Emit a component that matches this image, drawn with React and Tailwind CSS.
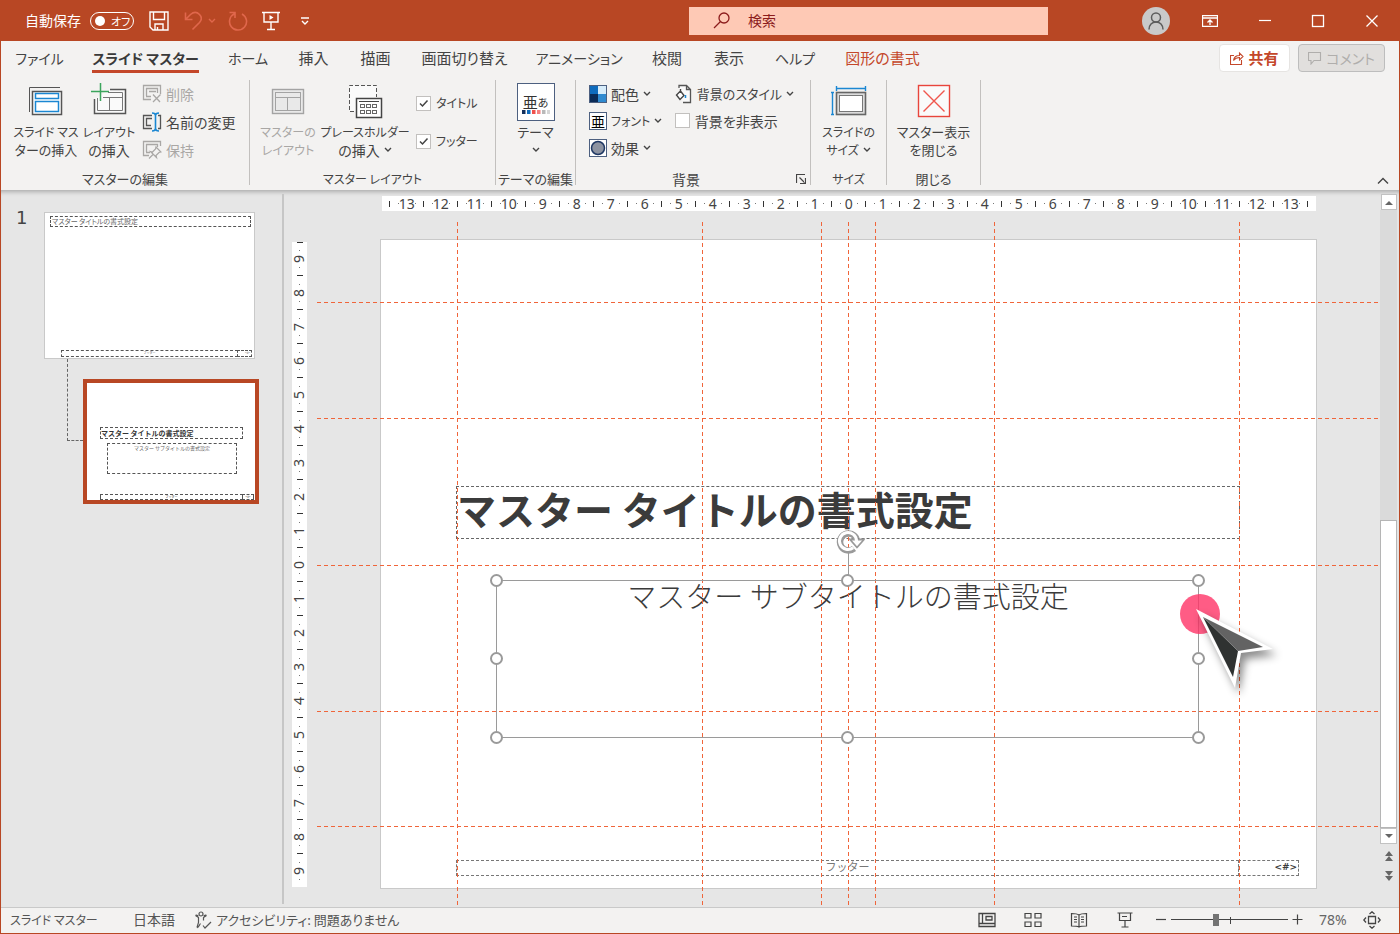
import { useState } from 'react';
import clsx from 'clsx';

const TABS = [
  { label: 'ファイル', width: 'w-[77px]' },
  { label: 'スライド マスター', width: 'w-[135px]', active: true },
  { label: 'ホーム', width: 'w-[70px]' },
  { label: '挿入', width: 'w-[61px]' },
  { label: '描画', width: 'w-[63px]' },
  { label: '画面切り替え', width: 'w-[115px]' },
  { label: 'アニメーション', width: 'w-[114px]' },
  { label: '校閲', width: 'w-[62px]' },
  { label: '表示', width: 'w-[62px]' },
  { label: 'ヘルプ', width: 'w-[70px]' },
  { label: '図形の書式', width: 'w-[105px]', context: true },
];

// guide offsets: vertical ones from the slide centre, horizontal ones from the top
const V_GUIDES = [-392, -147, -28, -1, 26, 145, 390];
const H_GUIDES = [112, 228, 375, 521, 636];

const HANDLES = [
  '-left-[7px] -top-[7px]',
  'left-1/2 -ml-[7px] -top-[7px]',
  '-right-[7px] -top-[7px]',
  '-left-[7px] top-1/2 -mt-[7px]',
  '-right-[7px] top-1/2 -mt-[7px]',
  '-left-[7px] -bottom-[7px]',
  'left-1/2 -ml-[7px] -bottom-[7px]',
  '-right-[7px] -bottom-[7px]',
];

// tick, dot, number, dot for every centimetre
function rulerMarks(max) {
  const marks = [];
  for (let n = -max; n <= max; n++) {
    marks.push('tick', 'dot', Math.abs(n), 'dot');
  }
  return marks;
}

// kana is set smaller than kanji so that long katakana labels stay narrow
function textSize(label) {
  const chars = label.replace(/\s/g, '');
  const kana = (chars.match(/[ぁ-んァ-ヶー]/g) || []).length;
  if (kana === chars.length) return 'text-xs';
  return kana / chars.length >= 0.5 ? 'text-[13px]' : 'text-sm';
}

/* ---------- icons ---------- */

function Svg({ w, h, children, className }) {
  return (
    <svg
      width={w}
      height={h}
      viewBox={`0 0 ${w} ${h}`}
      fill="none"
      stroke="currentColor"
      className={clsx('shrink-0', className)}
      aria-hidden="true"
    >
      {children}
    </svg>
  );
}

function Chevron() {
  return (
    <Svg w={8} h={6}>
      <path d="M1 1l3 3 3-3" strokeWidth="1.4" />
    </Svg>
  );
}

function SaveIcon() {
  return (
    <Svg w={20} h={20}>
      <path d="M1 1h18v18H4l-3-3zM4.500 1v7.500h11V1M6 19v-6h8v6M8.500 19v-3" strokeWidth="1.4" />
    </Svg>
  );
}

function UndoIcon() {
  return (
    <Svg w={18} h={20}>
      <path d="M1.500 1.500v7h7M1.500 8.500L6.500 3.500c3-2.500 6.500-2.500 9 0s2.200 5.500 0 8L8.500 18.500" strokeWidth="1.6" />
    </Svg>
  );
}

function RedoIcon() {
  return (
    <Svg w={20} h={20}>
      <path d="M1.500 1.500h5.500v5.500M6.500 2.800A8.500 8.500 0 1 0 14 3" strokeWidth="1.6" />
    </Svg>
  );
}

function PresentIcon() {
  return (
    <Svg w={18} h={20}>
      <path d="M0 1.500h18M2 1.500v9.500h14V1.500M9 11v7.500M5 18.500h8" strokeWidth="1.4" />
      <path d="M7.500 4v5l4-2.500z" fill="currentColor" stroke="none" />
    </Svg>
  );
}

function InsertMasterIcon() {
  return (
    <Svg w={36} h={36}>
      <path d="M1.500 29V4.500H32" stroke="#555" />
      <rect x="4.500" y="8.500" width="29" height="23" fill="#fff" stroke="#555" strokeWidth="1.5" />
      <rect x="7.500" y="10.500" width="23" height="5" stroke="#1b87d2" strokeWidth="1.5" />
      <rect x="7.500" y="18.500" width="23" height="10" stroke="#1b87d2" strokeWidth="1.5" />
    </Svg>
  );
}

function InsertLayoutIcon() {
  return (
    <Svg w={36} h={36}>
      <path d="M19 6.500h15.500v24h-31V16" fill="#fafafa" stroke="#555" strokeWidth="1.5" />
      <path d="M17 9.500h14.500v18h-25V15M12 14.500h19.500M18.500 14.500v13" stroke="#777" />
      <path d="M9.500 0v18M0 8.500h18" stroke="#3ba55c" strokeWidth="1.5" />
    </Svg>
  );
}

function MasterLayoutIcon() {
  return (
    <Svg w={36} h={36}>
      <rect x="2.500" y="6.500" width="31" height="24" fill="#e9e9e9" stroke="#a3a3a3" strokeWidth="1.4" />
      <rect x="5.500" y="9.500" width="25" height="18" stroke="#a3a3a3" />
      <path d="M5.500 14.500h25M17.500 14.500v13" stroke="#a3a3a3" />
    </Svg>
  );
}

function PlaceholderIcon() {
  return (
    <Svg w={36} h={36}>
      <path d="M7 28.500H2.500v-26h27V14" fill="#fafafa" stroke="#555" strokeDasharray="4 2" />
      <rect x="9.500" y="15.500" width="25" height="19" fill="#fff" stroke="#444" strokeWidth="1.5" />
      <path d="M12 18.500h20" stroke="#444" />
      {[14, 20, 26].map((x) => (
        <g key={x} stroke="#666">
          <rect x={x - 0.5} y="21.500" width="4" height="3" />
          <rect x={x - 0.5} y="27.500" width="4" height="3" />
        </g>
      ))}
    </Svg>
  );
}

function SlideSizeIcon() {
  return (
    <Svg w={36} h={36}>
      <rect x="5.500" y="9.500" width="29" height="22" fill="#dcdcdc" stroke="#666" strokeWidth="1.6" />
      <rect x="8.500" y="12.500" width="23" height="16" fill="#fff" stroke="#777" />
      <path d="M5 5.500h30M5.500 3v5M34.500 3v5M1.500 9v23M0 9.500h3M0 31.500h3" stroke="#1b87d2" strokeWidth="1.4" />
    </Svg>
  );
}

function CloseMasterIcon() {
  return (
    <Svg w={36} h={36}>
      <rect x="2.500" y="2.500" width="31" height="31" fill="#fafafa" stroke="#e8453c" strokeWidth="1.4" />
      <path d="M7.500 7.500l21 21M28.500 7.500l-21 21" stroke="#f0564d" strokeWidth="1.4" />
    </Svg>
  );
}

function ThemeIcon() {
  const swatches = ['#14305c', '#0f6cbd', '#f0504a', '#f58080', '#b9b9b9', '#d6d6d6'];
  return (
    <span className="flex h-[38px] w-[38px] flex-col items-center justify-end border border-[#4d6080] bg-white pb-1.5 text-[#333]">
      <span className="flex items-end leading-4">
        <span className="text-[15px]">亜</span>
        <span className="text-[11px]">あ</span>
      </span>
      <Svg w={28} h={4}>
        {swatches.map((c, i) => (
          <rect key={c} x={i * 5} y="0" width="3.5" height="4" fill={c} stroke="none" />
        ))}
      </Svg>
    </span>
  );
}

function DeleteIcon() {
  return (
    <Svg w={20} h={20}>
      <path d="M9 15.500H1.500v-14h17V10M4 12.500h5M4.500 12V4.500h11V9M7 7.500h7" strokeWidth="1.3" />
      <path d="M11 10.500l7 7.500M18.500 10.500L11 18" strokeWidth="1.3" />
    </Svg>
  );
}

function RenameIcon() {
  return (
    <Svg w={20} h={20}>
      <path d="M10 16.500H1.500v-13H10M9 13.500H4.500v-7H10M16 3.500h2.500v13H16" stroke="#555" strokeWidth="1.3" />
      <path d="M10 1c2 0 3.500 1 3.500 2.500v13c0 1.500-1.500 2.500-3.500 2.500M17 1c-2 0-3.500 1-3.500 2.500v13c0 1.500 1.500 2.500 3.500 2.500" stroke="#1b87d2" strokeWidth="1.6" />
    </Svg>
  );
}

function PreserveIcon() {
  return (
    <Svg w={20} h={20}>
      <path d="M7 15.500H1.500v-14h17V6M4 12.500h4M4.500 12V4.500h11V7" strokeWidth="1.3" />
      <path d="M14 7l5 5-2 .5-3 3 .5 2-6-6 2 .5 3-3zM11 14.500L7 18.500" strokeWidth="1.2" />
    </Svg>
  );
}

function ColorsIcon() {
  return (
    <Svg w={18} h={18}>
      <rect x="0" y="0" width="9" height="9" fill="#0f6cbd" stroke="none" />
      <rect x="9" y="0" width="9" height="9" fill="#d6ecfa" stroke="none" />
      <rect x="0" y="9" width="9" height="9" fill="#0b2c57" stroke="none" />
      <rect x="9" y="9" width="9" height="9" fill="#2f8ad0" stroke="none" />
      <rect x=".5" y=".5" width="17" height="17" stroke="#4d6080" />
    </Svg>
  );
}

function EffectsIcon() {
  return (
    <Svg w={18} h={18}>
      <rect x=".5" y=".5" width="17" height="17" fill="#fff" stroke="#4d6080" />
      <circle cx="9" cy="9" r="6.500" fill="#8d93a1" stroke="#1f3864" strokeWidth="1.5" />
    </Svg>
  );
}

function BackgroundStyleIcon() {
  return (
    <Svg w={18} h={20}>
      <path d="M4 4V1.500h7.500l4 4v13H8M11.500 1.500v4h4" fill="#fafafa" stroke="#555" strokeWidth="1.3" />
      <path d="M5.500 5v4M5.500 7L1.500 11l3.500 4.500L9 11.500z" fill="#fff" stroke="#444" strokeWidth="1.4" />
      <path d="M10.500 11v3" stroke="#1b87d2" strokeWidth="1.5" />
    </Svg>
  );
}

function RotateHandle() {
  return (
    <Svg w={30} h={26} className="absolute -top-[52px] left-1/2 -ml-[12px]">
      <path d="M18 19.500A8.500 8.500 0 1 1 20.500 10" stroke="#9a9a9a" strokeWidth="6.5" />
      <path d="M14 10.500h14l-7 8z" fill="#fff" stroke="#9a9a9a" strokeWidth="1.8" strokeLinejoin="round" />
      <path d="M17.200 18.700A8.500 8.500 0 1 1 20.500 12" stroke="#fff" strokeWidth="3" />
    </Svg>
  );
}

function Cursor() {
  return (
    <Svg w={96} h={96} className="absolute left-[813px] top-[366px] z-30 drop-shadow-[4px_6px_4px_rgba(0,0,0,0.45)]">
      <path d="M2 3l77 40-32 4L41 82z" fill="#fff" stroke="none" />
      <path d="M9 11l30 60 5-26z" fill="#2f3231" stroke="none" />
      <path d="M9 11l60 30-25 4z" fill="#636363" stroke="none" />
    </Svg>
  );
}

/* ---------- title bar ---------- */

function TitleBar() {
  return (
    <header className="flex h-[41px] items-center bg-[#b84724] text-white">
      <div className="flex w-[688px] items-center pl-6">
        <span className="pb-0.5 text-sm leading-5">自動保存</span>
        <button
          role="switch"
          aria-checked="false"
          aria-label="自動保存"
          className="ml-[9px] flex h-[18px] w-11 items-center gap-1.5 whitespace-nowrap rounded-full border border-white pl-1"
        >
          <span className="h-2.5 w-2.5 shrink-0 rounded-full bg-white" />
          <span className="text-[11px] leading-4">オフ</span>
        </button>
        <button aria-label="上書き保存" className="ml-[15px]">
          <SaveIcon />
        </button>
        <button aria-label="元に戻す" className="ml-[15px] flex items-center gap-1.5 text-[#e0674c]">
          <UndoIcon />
          <Chevron />
        </button>
        <button aria-label="やり直し" className="ml-3 text-[#e0674c]">
          <RedoIcon />
        </button>
        <button aria-label="最初から" className="ml-3.5">
          <PresentIcon />
        </button>
        <button aria-label="クイック アクセス ツール バーのユーザー設定" className="ml-5">
          <Svg w={10} h={8}>
            <path d="M1 1h8M2 4l3 3 3-3" strokeWidth="1.4" />
          </Svg>
        </button>
      </div>

      <label className="flex h-7 flex-1 items-center gap-[18px] bg-[#fec9b5] pl-6 text-[#8c1c1c]">
        <Svg w={17} h={17}>
          <circle cx="11" cy="6" r="5" strokeWidth="1.3" />
          <path d="M7.500 9.500L1 16" strokeWidth="1.3" />
        </Svg>
        <input
          type="text"
          aria-label="検索"
          placeholder="検索"
          className="min-w-0 flex-1 bg-transparent pb-0.5 text-sm outline-none placeholder:text-[#8c1c1c]"
        />
      </label>

      <div className="flex w-[351px] items-center pl-[94px]">
        <button aria-label="アカウント" className="rounded-full bg-[#c9c9c9] text-[#5c5c5c]">
          <Svg w={28} h={28}>
            <circle cx="14" cy="10.500" r="4.500" strokeWidth="1.5" />
            <path d="M7 22.500c0-4.500 3-7.500 7-7.500s7 3 7 7.500" strokeWidth="1.5" />
          </Svg>
        </button>
        <button aria-label="リボンの表示オプション" className="ml-8">
          <Svg w={16} h={12}>
            <path d="M.5.500h15v11H.5zM.5 3h15M8 10V5M5.500 7.500L8 5l2.500 2.500" strokeWidth="1.3" />
          </Svg>
        </button>
        <button aria-label="最小化" className="ml-10">
          <Svg w={14} h={14}>
            <path d="M1 6.500h12" strokeWidth="1.2" />
          </Svg>
        </button>
        <button aria-label="最大化" className="ml-[39px]">
          <Svg w={14} h={14}>
            <rect x="1.500" y="1.500" width="11" height="11" strokeWidth="1.3" />
          </Svg>
        </button>
        <button aria-label="閉じる" className="ml-10">
          <Svg w={14} h={14}>
            <path d="M1.500 1.500l11 11M12.500 1.500l-11 11" strokeWidth="1.3" />
          </Svg>
        </button>
      </div>
    </header>
  );
}

function TabBar() {
  return (
    <nav className="flex h-[35px] items-start">
      {TABS.map((tab) => (
        <button
          key={tab.label}
          className={clsx(
            'flex h-8 items-end justify-center whitespace-nowrap leading-6',
            tab.width,
            textSize(tab.label) === 'text-xs' ? 'text-sm' : 'text-[15px]',
            tab.active && 'font-bold text-[#3a3a3a]',
            tab.context && 'text-[#c4472a]'
          )}
        >
          <span className={clsx('border-b-[3px]', tab.active ? 'border-[#c4472a]' : 'border-transparent')}>
            {tab.label}
          </span>
        </button>
      ))}
      <div className="ml-auto flex gap-2 pr-3.5 pt-[3px]">
        <button className="flex h-7 w-[71px] items-center justify-center gap-1 rounded-sm border border-[#e6e4e2] bg-white text-[15px] font-bold text-[#c4472a]">
          <Svg w={14} h={14}>
            <path d="M4 4.500H.500v9h11V9M3.500 9.500c.5-3.500 2.500-5 6-5V2L13 5.500 9.500 9V6.500c-3 0-4.500 1-6 3z" strokeWidth="1.1" />
          </Svg>
          共有
        </button>
        <button
          disabled
          className="flex h-7 w-[87px] items-center justify-center gap-1 rounded-sm border border-[#bdbdbd] bg-[#e1dfdd] text-sm text-[#b0aeac]"
        >
          <Svg w={14} h={13}>
            <path d="M.5.500h12v8H6l-3 3.500V8.500H.500z" strokeWidth="1.1" />
          </Svg>
          コメント
        </button>
      </div>
    </nav>
  );
}

/* ---------- ribbon ---------- */

function Group({ label, width, children, launcher }) {
  return (
    <section className={clsx('flex flex-col border-r border-[#c2c0be]', width)}>
      <div className="flex h-[90px] shrink-0 items-start">{children}</div>
      <div className={clsx('flex h-[18px] shrink-0 items-center justify-center whitespace-nowrap', textSize(label))}>
        <span className={clsx(launcher && 'ml-auto')}>{label}</span>
        {launcher && (
          <button aria-label="背景の書式設定" className="ml-auto pr-1">
            <Svg w={10} h={10}>
              <path d="M.5 9V.500H9M3.500 3.500l5 5M9.500 4v5.500H4" strokeWidth="1.2" />
            </Svg>
          </button>
        )}
      </div>
    </section>
  );
}

function BigButton({ icon, lines, width, disabled, chevron }) {
  return (
    <button
      disabled={disabled}
      className={clsx('flex flex-col items-center pt-[3px]', width, disabled && 'text-[#a9a7a5]')}
    >
      <span className="flex h-10 items-start">{icon}</span>
      {lines.map((line, i) => (
        <span
          key={line}
          className={clsx('flex h-[18px] items-center gap-1 whitespace-nowrap', textSize(line))}
        >
          {line}
          {chevron && i === lines.length - 1 && <Chevron />}
        </span>
      ))}
    </button>
  );
}

function SmallButton({ icon, label, disabled, chevron }) {
  return (
    <button
      disabled={disabled}
      className={clsx('flex items-center gap-1 whitespace-nowrap', textSize(label), disabled && 'text-[#a9a7a5]')}
    >
      {icon}
      {label}
      {chevron && <Chevron />}
    </button>
  );
}

function Check({ label, defaultChecked }) {
  return (
    <label className={clsx('flex items-center gap-[5px] whitespace-nowrap', textSize(label))}>
      <span className="grid h-[15px] w-[15px]">
        <input
          type="checkbox"
          defaultChecked={defaultChecked}
          className="peer m-0 h-[15px] w-[15px] appearance-none border border-[#c2c0be] bg-white [grid-area:1/1]"
        />
        <Svg w={15} h={15} className="pointer-events-none hidden [grid-area:1/1] peer-checked:block">
          <path d="M4 7.500l2.500 2.500 5-5.500" strokeWidth="1.5" />
        </Svg>
      </span>
      {label}
    </label>
  );
}

function Ribbon() {
  return (
    <div className="flex h-[114px] pt-1 pb-[5px]">
      <Group label="マスターの編集" width="w-[249px]">
        <BigButton icon={<InsertMasterIcon />} lines={['スライド マス', 'ターの挿入']} width="w-[76px] ml-[7px]" />
        <BigButton icon={<InsertLayoutIcon />} lines={['レイアウト', 'の挿入']} width="w-[50px]" />
        <div className="ml-2 grid auto-rows-[28px]">
          <SmallButton icon={<DeleteIcon />} label="削除" disabled />
          <SmallButton icon={<RenameIcon />} label="名前の変更" />
          <SmallButton icon={<PreserveIcon />} label="保持" disabled />
        </div>
      </Group>

      <Group label="マスター レイアウト" width="w-[246px]">
        <BigButton
          icon={<MasterLayoutIcon />}
          lines={['マスターの', 'レイアウト']}
          width="w-[60px] ml-2"
          disabled
        />
        <BigButton icon={<PlaceholderIcon />} lines={['プレースホルダー', 'の挿入']} width="w-[94px]" chevron />
        <div className="ml-1 grid auto-rows-[38px] pt-1">
          <Check label="タイトル" defaultChecked />
          <Check label="フッター" defaultChecked />
        </div>
      </Group>

      <Group label="テーマの編集" width="w-20">
        <button className="flex w-full flex-col items-center pt-[3px] text-[13px]">
          <ThemeIcon />
          <span className="h-[22px] leading-[22px]">テーマ</span>
          <span className="pt-1">
            <Chevron />
          </span>
        </button>
      </Group>

      <Group label="背景" width="w-[235px]" launcher>
        <div className="grid auto-rows-[27px] pl-[13px]">
          <SmallButton icon={<ColorsIcon />} label="配色" chevron />
          <SmallButton
            icon={
              <span className="flex h-[18px] w-[18px] items-center justify-center border border-[#4d6080] bg-white text-sm text-black">
                亜
              </span>
            }
            label="フォント"
            chevron
          />
          <SmallButton icon={<EffectsIcon />} label="効果" chevron />
        </div>
        <div className="ml-auto grid auto-rows-[27px] pr-4">
          <SmallButton icon={<BackgroundStyleIcon />} label="背景のスタイル" chevron />
          <Check label="背景を非表示" />
        </div>
      </Group>

      <Group label="サイズ" width="w-[76px]">
        <BigButton icon={<SlideSizeIcon />} lines={['スライドの', 'サイズ']} width="w-full" chevron />
      </Group>

      <Group label="閉じる" width="w-[94px]">
        <BigButton icon={<CloseMasterIcon />} lines={['マスター表示', 'を閉じる']} width="w-full" />
      </Group>

      <button aria-label="リボンを折りたたむ" className="ml-auto mr-[10px] self-end">
        <Svg w={12} h={8}>
          <path d="M1 6.500l5-5 5 5" strokeWidth="1.4" />
        </Svg>
      </button>
    </div>
  );
}

/* ---------- thumbnails ---------- */

function Thumbnails() {
  return (
    <aside className="mb-[3px] mt-1 flex w-[283px] shrink-0 items-start border-r-2 border-[#c6c6c6] pl-[15px] pt-[18px] [font-feature-settings:normal]">
      <span className="w-7 text-lg leading-3 [font-family:'DejaVu_Sans',sans-serif]">1</span>
      <div className="flex flex-col">
        <button
          aria-label="スライド マスター"
          className="relative h-[147px] w-[211px] border border-[#c9c9c9] bg-white text-[#666]"
        >
          <span className="absolute left-[5px] top-[3px] flex h-[11px] w-[201px] items-center border border-dashed border-[#555] pl-px text-[7px] leading-none [font-feature-settings:'palt']">
            マスター タイトルの書式設定
          </span>
          <span className="absolute bottom-px left-4 h-[7px] w-[177px] border border-dashed border-[#555] text-[3px] leading-[5px]">
            フッター
          </span>
          <span className="absolute bottom-px left-[192px] h-[7px] w-[15px] border border-dashed border-[#555] pr-px text-right text-[3px] leading-[5px]">
            &lt;#&gt;
          </span>
        </button>
        <div className="flex items-start">
          <span className="ml-[23px] h-[82px] w-4 border-b border-l border-dashed border-[#666]" />
          <button
            aria-label="タイトル スライド レイアウト"
            className="relative mt-5 h-[125px] w-[176px] border-4 border-[#b84724] bg-white"
          >
            <span className="absolute left-[13px] top-[44px] flex h-3 w-[143px] items-center border border-dashed border-[#555] text-[7px] font-bold leading-none text-[#333]">
              マスター タイトルの書式設定
            </span>
            <span className="absolute left-5 top-[60px] h-[31px] w-[130px] border border-dashed border-[#555] text-[5px] leading-[7px] text-[#666]">
              マスター サブタイトルの書式設定
            </span>
            <span className="absolute bottom-0 left-[13px] h-1.5 w-[143px] border border-dashed border-[#555] text-[3px] leading-[4px]">
              フッター
            </span>
            <span className="absolute bottom-0 left-[155px] h-1.5 w-3 border border-dashed border-[#555] text-[3px] leading-[4px]">
              &lt;#&gt;
            </span>
          </button>
        </div>
      </div>
    </aside>
  );
}

/* ---------- canvas ---------- */

function HorizontalRuler() {
  return (
    <div className="mx-auto flex h-[15px] w-[934px] bg-white pl-1 pr-[3px]">
      {[...rulerMarks(13), 'tick'].map((mark, i) => (
        <span key={i} className="flex min-w-0 flex-1 items-center justify-center">
          {mark === 'tick' && <span className="h-1.5 w-px shrink-0 bg-[#333]" />}
          {mark === 'dot' && <span className="h-px w-px shrink-0 bg-[#777]" />}
          {typeof mark === 'number' && <span>{mark}</span>}
        </span>
      ))}
    </div>
  );
}

function VerticalRuler() {
  return (
    <div className="flex h-[645px] w-[15px] flex-col bg-white pb-1">
      <span className="mx-auto h-1">
        <span className="block h-px w-1.5 bg-[#333]" />
      </span>
      {rulerMarks(9)
        .slice(1)
        .map((mark, i) => (
          <span key={i} className="flex min-h-0 flex-1 items-center justify-center">
            {mark === 'tick' && <span className="h-px w-1.5 bg-[#333]" />}
            {mark === 'dot' && <span className="h-px w-px bg-[#777]" />}
            {typeof mark === 'number' && <span className="-rotate-90 leading-none">{mark}</span>}
          </span>
        ))}
    </div>
  );
}

function Guides() {
  return (
    <div className="pointer-events-none absolute inset-0 z-10">
      {V_GUIDES.map((x) => (
        <span
          key={x}
          style={{ left: `calc(50% + ${x}px)` }}
          className="absolute bottom-0 top-8 w-px bg-[repeating-linear-gradient(180deg,#f0653a_0_4px,transparent_4px_7px)]"
        />
      ))}
      {H_GUIDES.map((y) => (
        <span
          key={y}
          style={{ top: y }}
          className="absolute left-0 right-0 h-px bg-[repeating-linear-gradient(90deg,#f0653a_0_4px,transparent_4px_7px)]"
        />
      ))}
    </div>
  );
}

function Slide() {
  return (
    <div className="relative mx-auto mt-7 h-[650px] w-[937px] border border-[#c9c9c9] bg-white text-[#3b3b3b] [font-feature-settings:normal]">
      <h1 className="absolute left-[75px] top-[246px] flex h-[53px] w-[784px] items-center whitespace-nowrap border border-dashed border-[#666] pb-2 text-[39px] font-bold leading-none">
        マスター タイトルの書式設定
      </h1>
      <p className="absolute left-[116px] top-[339px] w-[702px] whitespace-nowrap text-center text-[29px] font-light leading-8">
        マスター サブタイトルの書式設定
      </p>
      <p className="absolute left-[75px] top-[620px] h-4 w-[783px] border border-dashed border-[#777] text-center text-[11px] leading-[11px] text-[#777]">
        フッター
      </p>
      <p className="absolute left-[857px] top-[620px] h-4 w-[61px] border border-dashed border-[#777] pr-px text-right text-[9px] font-bold leading-[13px] [font-family:'DejaVu_Sans',sans-serif]">
        &lt;#&gt;
      </p>

      <div className="absolute left-[115px] top-[340px] z-20 h-[158px] w-[703px] border border-[#9a9a9a]">
        <span className="absolute -top-[30px] left-1/2 h-6 w-px bg-[#9a9a9a]" />
        <RotateHandle />
        {HANDLES.map((pos) => (
          <span key={pos} className={clsx('absolute h-[13px] w-[13px] rounded-full border-2 border-[#9a9a9a] bg-white', pos)} />
        ))}
      </div>

      <span className="absolute left-[799px] top-[354px] z-20 h-10 w-10 rounded-full bg-[#ff3366]/80" />
      <Cursor />
    </div>
  );
}

function ScrollBar() {
  return (
    <div className="mr-0.5 flex w-[17px] shrink-0 flex-col items-center pt-1">
      <button aria-label="上へ" className="flex h-4 w-4 items-center justify-center border border-[#c2c2c2] bg-white text-[#666]">
        <Svg w={8} h={5}>
          <path d="M0 5l4-4 4 4z" fill="currentColor" stroke="none" />
        </Svg>
      </button>
      <div className="flex w-full flex-1 flex-col items-center justify-end bg-[#dadada]">
        <span className="h-[308px] w-[17px] border border-[#b5b5b5] bg-white" />
      </div>
      <button aria-label="下へ" className="flex h-4 w-[17px] items-center justify-center border border-[#c2c2c2] bg-white text-[#666]">
        <Svg w={8} h={5}>
          <path d="M0 0l4 4 4-4z" fill="currentColor" stroke="none" />
        </Svg>
      </button>
      <button aria-label="前のスライド" className="mt-[7px] text-[#666]">
        <Svg w={10} h={10}>
          <path d="M1 5l4-5 4 5zM1 10l4-5 4 5z" fill="currentColor" stroke="none" />
        </Svg>
      </button>
      <button aria-label="次のスライド" className="mb-[26px] mt-2.5 text-[#666]">
        <Svg w={10} h={10}>
          <path d="M1 0l4 5 4-5zM1 5l4 5 4-5z" fill="currentColor" stroke="none" />
        </Svg>
      </button>
    </div>
  );
}

function Canvas() {
  return (
    <main className="flex flex-1">
      <div className="w-[33px] shrink-0 pl-2 pt-[52px] text-sm text-[#444] [font-family:'Noto_Sans',sans-serif]">
        <VerticalRuler />
      </div>
      <div className="relative flex-1 pb-[18px] pt-1.5">
        <div className="text-sm leading-none text-[#444] [font-family:'Noto_Sans',sans-serif]">
          <HorizontalRuler />
        </div>
        <Slide />
        <Guides />
      </div>
      <ScrollBar />
    </main>
  );
}

/* ---------- status bar ---------- */

function StatusBar() {
  const [zoom, setZoom] = useState(78);

  return (
    <footer className="flex h-[26px] items-center border-t border-[#c9c9c9] pb-0.5 text-sm leading-5 text-[#555]">
      <span className="w-[124px] whitespace-nowrap pl-[9px] text-xs">スライド マスター</span>
      <button className="ml-2 pb-px">日本語</button>
      <button className="ml-[19px] flex items-center gap-1 whitespace-nowrap text-[13px]">
        <Svg w={18} h={18}>
          <circle cx="7" cy="3" r="2" strokeWidth="1.2" />
          <path d="M1.500 4.500l3 2v5L3 16.500M12.500 4.500l-3 2v3M1.500 4.500c1-1 2 0 3 .5M12.500 4.500c-1-1-2 0-3 .5M3 16.500c1.500.5 2-2 3.500-4M9 14.500l2 2.500 6-6" strokeWidth="1.2" />
        </Svg>
        アクセシビリティ: 問題ありません
      </button>

      <div className="ml-auto flex items-center pr-[18px] text-[#444]">
        <button aria-label="標準">
          <Svg w={18} h={16}>
            <path d="M1 1.500h16v13H1zM4.500 1.500v10M1 11.500h16M8 4.500h6v3.500H8z" strokeWidth="1.3" />
          </Svg>
        </button>
        <button aria-label="スライド一覧" className="ml-7">
          <Svg w={18} h={16}>
            <path d="M1 1.500h6v4.500H1zM11 1.500h6v4.500h-6zM1 10h6v4.500H1zM11 10h6v4.500h-6z" strokeWidth="1.2" />
          </Svg>
        </button>
        <button aria-label="閲覧表示" className="ml-7">
          <Svg w={18} h={16}>
            <path d="M9 3v12M9 3C7 1.500 4 1.500 1.500 1.500v12.500c3 0 5.500 0 7.500 1 2-1 4.500-1 7.500-1V1.500C14 1.500 11 1.500 9 3zM4 5h3M4 7.500h3M4 10h3M11 5h3M11 7.500h3M11 10h3" strokeWidth="1.2" />
          </Svg>
        </button>
        <button aria-label="スライド ショー" className="ml-7">
          <Svg w={18} h={16}>
            <path d="M1.500 1h15M3.500 1v7.500h11V1M9 8.500V15M5.500 15h7M6 4.500h5" strokeWidth="1.2" />
          </Svg>
        </button>
        <button aria-label="縮小" className="ml-[22px]" onClick={() => setZoom(Math.max(10, zoom - 10))}>
          <Svg w={11} h={11}>
            <path d="M0 5.500h10" strokeWidth="1.2" />
          </Svg>
        </button>
        <span className="relative ml-1 flex h-4 w-[117px] items-center">
          <span className="absolute left-1/2 top-[5px] h-[7px] w-px bg-[#444]" />
          <input
            type="range"
            min="10"
            max="190"
            value={zoom}
            onChange={(e) => setZoom(Number(e.target.value))}
            aria-label="ズーム"
            className="h-3 w-full appearance-none bg-transparent bg-[linear-gradient(#444,#444)] bg-[length:100%_1px] bg-center bg-no-repeat [&::-webkit-slider-thumb]:h-3 [&::-webkit-slider-thumb]:w-1.5 [&::-webkit-slider-thumb]:appearance-none [&::-webkit-slider-thumb]:bg-[#737373]"
          />
        </span>
        <button aria-label="拡大" className="ml-1" onClick={() => setZoom(Math.min(190, zoom + 10))}>
          <Svg w={11} h={11}>
            <path d="M.5 5.500h10M5.500.500v10" strokeWidth="1.2" />
          </Svg>
        </button>
        <button className="ml-4 w-8 text-left text-[#666] [font-family:'Noto_Sans',sans-serif]">{zoom}%</button>
        <button aria-label="ウィンドウに合わせる" className="ml-3">
          <Svg w={18} h={18}>
            <path d="M5.500 5.500h7v7h-7zM6.500 3L9 .8 11.500 3M6.500 15L9 17.200l2.500-2.200M3 6.500L.8 9 3 11.500M15 6.500L17.200 9 15 11.500" strokeWidth="1.3" />
          </Svg>
        </button>
      </div>
    </footer>
  );
}

export default function App() {
  return (
    <div className="flex min-h-screen flex-col border-x border-b border-[#b84724] bg-[#f3f2f1] text-[#444] [font-family:'Noto_Sans_CJK_JP',sans-serif] [font-feature-settings:'palt']">
      <TitleBar />
      <TabBar />
      <Ribbon />
      <div className="flex flex-1 bg-[#e6e6e6] shadow-[inset_0_5px_4px_-3px_rgba(0,0,0,0.25)]">
        <Thumbnails />
        <Canvas />
      </div>
      <StatusBar />
    </div>
  );
}
